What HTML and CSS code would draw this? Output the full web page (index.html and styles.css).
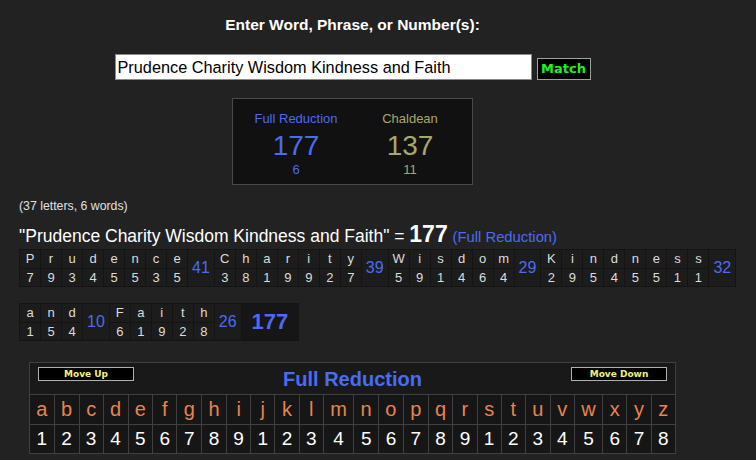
FILE: index.html
```html
<!DOCTYPE html>
<html>
<head>
<meta charset="utf-8">
<link rel="stylesheet" href="styles.css">
</head>
<body>
<div class="top">
  <div class="title">Enter Word, Phrase, or Number(s):</div>
  <div class="inrow">
    <input class="phrase" type="text" value="Prudence Charity Wisdom Kindness and Faith">
    <button class="match">Match</button>
  </div>
  <div class="results">
    <div class="rcol rc1">
      <div class="rlabel">Full Reduction</div>
      <div class="rnum">177</div>
      <div class="rsub">6</div>
    </div>
    <div class="rcol rc2">
      <div class="rlabel">Chaldean</div>
      <div class="rnum">137</div>
      <div class="rsub">11</div>
    </div>
  </div>
</div>
<div class="count">(37 letters, 6 words)</div>
<div class="eq">"Prudence Charity Wisdom Kindness and Faith" = <b class="eqv">177</b> <span class="eqc">(Full Reduction)</span></div>
<div class="breakdown">
  <table class="word"><tr class="lr"><td>P</td><td>r</td><td>u</td><td>d</td><td>e</td><td>n</td><td>c</td><td>e</td><td class="ws" rowspan="2">41</td></tr><tr class="nr"><td>7</td><td>9</td><td>3</td><td>4</td><td>5</td><td>5</td><td>3</td><td>5</td></tr></table>
  <table class="word"><tr class="lr"><td>C</td><td>h</td><td>a</td><td>r</td><td>i</td><td>t</td><td>y</td><td class="ws" rowspan="2">39</td></tr><tr class="nr"><td>3</td><td>8</td><td>1</td><td>9</td><td>9</td><td>2</td><td>7</td></tr></table>
  <table class="word"><tr class="lr"><td>W</td><td>i</td><td>s</td><td>d</td><td>o</td><td>m</td><td class="ws" rowspan="2">29</td></tr><tr class="nr"><td>5</td><td>9</td><td>1</td><td>4</td><td>6</td><td>4</td></tr></table>
  <table class="word"><tr class="lr"><td>K</td><td>i</td><td>n</td><td>d</td><td>n</td><td>e</td><td>s</td><td>s</td><td class="ws" rowspan="2">32</td></tr><tr class="nr"><td>2</td><td>9</td><td>5</td><td>4</td><td>5</td><td>5</td><td>1</td><td>1</td></tr></table>
  <table class="word"><tr class="lr"><td>a</td><td>n</td><td>d</td><td class="ws" rowspan="2">10</td></tr><tr class="nr"><td>1</td><td>5</td><td>4</td></tr></table>
  <table class="word"><tr class="lr"><td>F</td><td>a</td><td>i</td><td>t</td><td>h</td><td class="ws" rowspan="2">26</td></tr><tr class="nr"><td>6</td><td>1</td><td>9</td><td>2</td><td>8</td></tr></table>
  <table class="word total"><tr><td class="tot">177</td></tr></table>
</div>
<div class="panelwrap">
  <table class="cipher">
    <tr><td class="phead" colspan="26">
      <div class="hbar">
        <button class="mv">Move Up</button>
        <div class="ptitle">Full Reduction</div>
        <button class="mv">Move Down</button>
      </div>
    </td></tr>
    <tr class="clet"><td>a</td><td>b</td><td>c</td><td>d</td><td>e</td><td>f</td><td>g</td><td>h</td><td>i</td><td>j</td><td>k</td><td>l</td><td>m</td><td>n</td><td>o</td><td>p</td><td>q</td><td>r</td><td>s</td><td>t</td><td>u</td><td>v</td><td>w</td><td>x</td><td>y</td><td>z</td></tr>
    <tr class="cnum"><td>1</td><td>2</td><td>3</td><td>4</td><td>5</td><td>6</td><td>7</td><td>8</td><td>9</td><td>1</td><td>2</td><td>3</td><td>4</td><td>5</td><td>6</td><td>7</td><td>8</td><td>9</td><td>1</td><td>2</td><td>3</td><td>4</td><td>5</td><td>6</td><td>7</td><td>8</td></tr>
  </table>
</div>
</body>
</html>
```
FILE: styles.css
```css
html, body {
  margin: 0;
  padding: 0;
  background: #222222;
  color: #dddddd;
  font-family: "Liberation Sans", Arial, sans-serif;
}
body {
  width: 756px;
  height: 460px;
  overflow: hidden;
}
.top {
  width: 705px;
  display: flex;
  flex-direction: column;
  align-items: center;
}
.title {
  margin-top: 16px;
  font-size: 15.5px;
  line-height: 18px;
  font-weight: bold;
  color: #ffffff;
}
.inrow {
  margin-top: 20px;
  display: flex;
  align-items: flex-end;
  gap: 5px;
}
.phrase {
  box-sizing: border-box;
  width: 417px;
  height: 26px;
  margin: 0;
  padding: 0 2px;
  border: 1px solid #8a8a8a;
  background: #ffffff;
  color: #000000;
  font-family: "Liberation Sans", Arial, sans-serif;
  font-size: 16.3px;
  outline: none;
}
.match {
  box-sizing: border-box;
  width: 54px;
  height: 22px;
  margin: 0;
  padding: 0;
  background: #000000;
  border: 1px solid #a0a0a0;
  color: #22ee22;
  font-family: "DejaVu Sans", Verdana, sans-serif;
  font-weight: bold;
  font-size: 13px;
  line-height: 20px;
}
.results {
  margin-top: 18px;
  box-sizing: border-box;
  width: 241px;
  height: 87px;
  border: 1px solid #4a4a4a;
  background: #111111;
  display: flex;
  gap: 41px;
  padding: 13px 0 0 20px;
}
.rcol {
  display: flex;
  flex-direction: column;
  align-items: center;
}
.rc1 { width: 86px; color: #4a6cf0; }
.rc2 { width: 60px; color: #a9a86c; }
.rlabel {
  font-size: 13px;
  line-height: 14px;
  white-space: nowrap;
}
.rnum {
  margin-top: 5px;
  font-size: 28px;
  line-height: 30px;
}
.rsub {
  margin-top: 2px;
  font-size: 13px;
  line-height: 14px;
}
.count {
  margin-top: 14px;
  padding-left: 19px;
  font-size: 12.3px;
  line-height: 14px;
  color: #e0e0e0;
}
.eq {
  margin-top: 11px;
  padding-left: 19px;
  height: 20px;
  font-size: 17.5px;
  line-height: 20px;
  color: #ffffff;
  white-space: nowrap;
}
.eqv {
  font-size: 23px;
  line-height: 20px;
  font-weight: bold;
}
.eqc {
  font-size: 14.8px;
  color: #4a6cf0;
}
.breakdown {
  margin-top: 5px;
  padding-left: 19px;
  width: 729px;
  display: flex;
  flex-wrap: wrap;
  row-gap: 16px;
}
.word {
  border-collapse: separate;
  border-spacing: 1px;
  background: #141414;
  margin-right: -1px;
}
.word td {
  background: #1c1c1c;
  padding: 0;
  text-align: center;
  font-size: 13px;
  color: #dddddd;
}
.word .lr td {
  width: 20px;
  height: 18px;
  line-height: 18px;
}
.word .nr td {
  width: 20px;
  height: 17px;
  line-height: 15px;
}
.word td.ws {
  width: auto;
  padding: 0 4px;
  font-size: 16px;
  color: #4a6cf0;
  line-height: 18px;
}
.word td.tot {
  height: 36px;
  padding: 0 10px;
  font-size: 22px;
  font-weight: bold;
  color: #4a6cf0;
  background: #161616;
}
.panelwrap {
  width: 705px;
  margin-top: 21px;
  display: flex;
  justify-content: center;
}
.cipher {
  width: 647px;
  border-collapse: collapse;
  background: #181818;
  border: 1px solid #404040;
}
.cipher td {
  border: 1px solid #404040;
  padding: 0 6px;
  text-align: center;
  background: #161616;
}
.cipher td.phead {
  padding: 0;
  height: 31px;
  background: #191919;
}
.hbar {
  display: flex;
  justify-content: space-between;
  align-items: center;
  height: 31px;
  padding: 0 8px;
}
.mv {
  align-self: flex-start;
  margin-top: 4px;
  box-sizing: border-box;
  width: 96px;
  height: 14px;
  padding: 0;
  background: #000000;
  border: 1px solid #b0b0b0;
  color: #f2f27a;
  font-family: "DejaVu Sans", Verdana, sans-serif;
  font-weight: bold;
  font-size: 9px;
  line-height: 12px;
}
.ptitle {
  font-size: 20px;
  font-weight: bold;
  color: #4a6cf0;
  line-height: 24px;
}
.clet td {
  height: 29px;
  line-height: 29px;
  font-size: 20px;
  color: #e8844c;
}
.cnum td {
  height: 28px;
  line-height: 28px;
  font-size: 19px;
  color: #ffffff;
}
```
